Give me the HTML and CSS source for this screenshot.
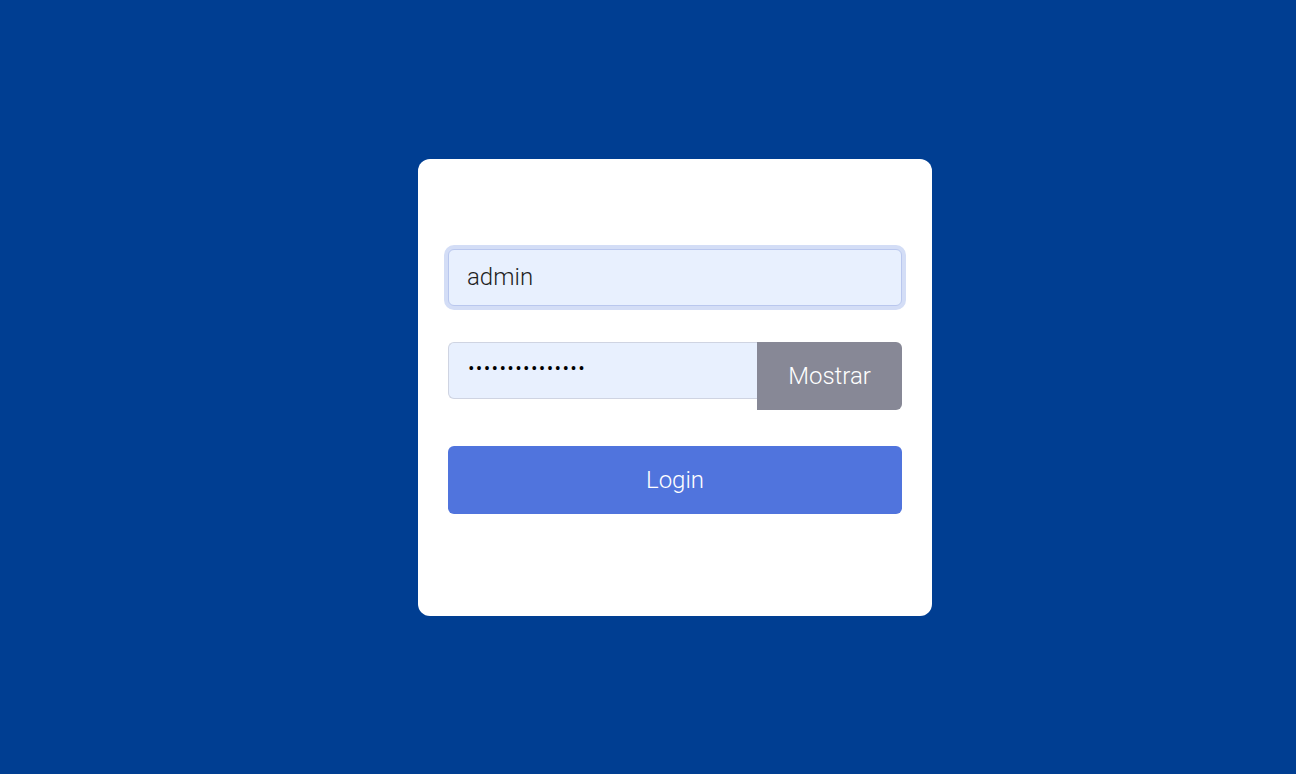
FILE: index.html
```html
<!DOCTYPE html>
<html lang="es">
<head>
  <meta charset="UTF-8" />
  <meta name="viewport" content="width=device-width, initial-scale=1" />
  <title>Login</title>
  <link rel="stylesheet" href="styles.css">
</head>
<body>
  <form class="login-card" onsubmit="return false">
    <input type="text" class="field field-focus" id="user" value="admin" autocomplete="off" autofocus />

    <div class="pass-row">
      <input type="password" class="field pass-field" id="pass" value="adminadmin12345" />
      <button type="button" class="show-btn" id="showBtn">Mostrar</button>
    </div>

    <button type="submit" class="login-btn">Login</button>
  </form>

  <script>
    const user = document.getElementById("user");
    user.focus();
    user.setSelectionRange(user.value.length, user.value.length);

    document.getElementById("showBtn").addEventListener("click", function () {
      const pass = document.getElementById("pass");
      const hidden = pass.type === "password";
      pass.type = hidden ? "text" : "password";
      this.textContent = hidden ? "Ocultar" : "Mostrar";
    });
  </script>
</body>
</html>
```

FILE: styles.css
```css
html,
body {
  height: 100%;
}
body {
  margin: 0;
  background-color: #003e92;
  font-family: Roboto, "Liberation Sans", sans-serif;
  font-weight: 300;
  display: flex;
  align-items: center;
  justify-content: center;
  padding-left: 54px;
  box-sizing: border-box;
}
.login-card {
  width: 514px;
  box-sizing: border-box;
  background: #fff;
  border-radius: 12px;
  padding: 90px 30px 102px;
  display: flex;
  flex-direction: column;
  gap: 36px;
}
.field {
  height: 57px;
  box-sizing: border-box;
  border: 1px solid #cfd4e2;
  border-radius: 6px;
  background-color: #e8f0fe;
  padding: 0 18px;
  font-family: inherit;
  font-weight: 300;
  font-size: 24px;
  color: #1f1f1f;
  caret-color: #000;
  outline: none;
  width: 100%;
  margin: 0;
}
.field-focus {
  border-color: #b9c7ee;
  box-shadow: 0 0 0 4px #d3ddf6;
}
.pass-row {
  display: flex;
  align-items: flex-start;
}
.pass-field {
  flex: 1;
  border-radius: 6px 0 0 6px;
  border-right: none;
  color: #000;
  font-size: 20px;
  letter-spacing: 1.4px;
  padding-left: 19px;
  padding-bottom: 4px;
}
.show-btn {
  width: 145px;
  height: 68px;
  border: none;
  border-radius: 0 6px 6px 0;
  background-color: #878896;
  color: #fff;
  font-family: inherit;
  font-weight: 300;
  font-size: 24px;
  padding: 0;
  cursor: pointer;
}
.login-btn {
  height: 68px;
  border: none;
  border-radius: 6px;
  background-color: #5074dd;
  color: #fff;
  font-family: inherit;
  font-weight: 300;
  font-size: 24px;
  cursor: pointer;
}
```
